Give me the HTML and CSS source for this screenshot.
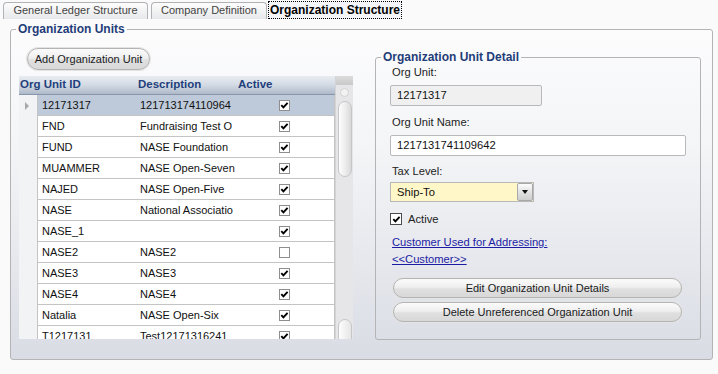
FILE: index.html
```html
<!DOCTYPE html>
<html>
<head>
<meta charset="utf-8">
<link rel="stylesheet" href="styles.css">
</head>
<body>
<div class="tabs">
  <div class="tab tab1">General Ledger Structure</div>
  <div class="tab tab2">Company Definition</div>
  <div class="tab tab-active">Organization Structure</div>
</div>
<fieldset class="units">
  <legend class="legend">Organization Units</legend>
  <div class="left">
    <button class="btn btn-add">Add Organization Unit</button>
    <div class="grid">
      <div class="table">
        <div class="thead">
          <div class="th th1">Org Unit ID</div>
          <div class="th th2">Description</div>
          <div class="th th3">Active</div>
        </div>
        <div class="row sel">
          <div class="rh"><span class="arrow"></span></div>
          <div class="cells"><span class="c1">12171317</span><span class="c2">121713174110964</span><span class="c3"><span class="chk on"></span></span></div>
        </div>
        <div class="row"><div class="rh"></div><div class="cells"><span class="c1">FND</span><span class="c2">Fundraising Test O</span><span class="c3"><span class="chk on"></span></span></div></div>
        <div class="row"><div class="rh"></div><div class="cells"><span class="c1">FUND</span><span class="c2">NASE Foundation</span><span class="c3"><span class="chk on"></span></span></div></div>
        <div class="row"><div class="rh"></div><div class="cells"><span class="c1">MUAMMER</span><span class="c2">NASE Open-Seven</span><span class="c3"><span class="chk on"></span></span></div></div>
        <div class="row"><div class="rh"></div><div class="cells"><span class="c1">NAJED</span><span class="c2">NASE Open-Five</span><span class="c3"><span class="chk on"></span></span></div></div>
        <div class="row"><div class="rh"></div><div class="cells"><span class="c1">NASE</span><span class="c2">National Associatio</span><span class="c3"><span class="chk on"></span></span></div></div>
        <div class="row"><div class="rh"></div><div class="cells"><span class="c1">NASE_1</span><span class="c2"></span><span class="c3"><span class="chk on"></span></span></div></div>
        <div class="row"><div class="rh"></div><div class="cells"><span class="c1">NASE2</span><span class="c2">NASE2</span><span class="c3"><span class="chk"></span></span></div></div>
        <div class="row"><div class="rh"></div><div class="cells"><span class="c1">NASE3</span><span class="c2">NASE3</span><span class="c3"><span class="chk on"></span></span></div></div>
        <div class="row"><div class="rh"></div><div class="cells"><span class="c1">NASE4</span><span class="c2">NASE4</span><span class="c3"><span class="chk on"></span></span></div></div>
        <div class="row"><div class="rh"></div><div class="cells"><span class="c1">Natalia</span><span class="c2">NASE Open-Six</span><span class="c3"><span class="chk on"></span></span></div></div>
        <div class="row"><div class="rh"></div><div class="cells"><span class="c1">T1217131</span><span class="c2">Test12171316241</span><span class="c3"><span class="chk on"></span></span></div></div>
      </div>
      <div class="sb">
        <div class="sb-cap"></div>
        <div class="sb-knob"></div>
        <div class="sb-thumb"></div>
        <div class="sb-fill"></div>
        <div class="sb-bottom"></div>
      </div>
    </div>
  </div>
  <fieldset class="detail">
    <legend class="legend legend-detail">Organization Unit Detail</legend>
    <div class="lbl">Org Unit:</div>
    <div class="field ro">12171317</div>
    <div class="lbl lbl2">Org Unit Name:</div>
    <div class="field inp">1217131741109642</div>
    <div class="lbl lbl3">Tax Level:</div>
    <div class="combo"><span class="combo-text">Ship-To</span><span class="combo-btn"><span class="tri"></span></span></div>
    <div class="active-row"><span class="chk2"></span><span>Active</span></div>
    <a class="link link1" href="#">Customer Used for Addressing:</a>
    <a class="link link2" href="#">&lt;&lt;Customer&gt;&gt;</a>
    <button class="btn wide wide1">Edit Organization Unit Details</button>
    <button class="btn wide wide2">Delete Unreferenced Organization Unit</button>
  </fieldset>
</fieldset>
</body>
</html>
```
FILE: styles.css
```css
* { box-sizing: border-box; }
html, body { margin: 0; }
body {
  width: 718px;
  height: 374px;
  overflow: hidden;
  background: #fafafb;
  font-family: "Liberation Sans", Arial, sans-serif;
  font-size: 11px;
  color: #111;
}
.tabs {
  display: flex;
  align-items: flex-start;
  height: 22px;
  padding-left: 3px;
}
.tab {
  margin-top: 2px;
  height: 17px;
  border: 1px solid #b0b2b6;
  border-bottom: none;
  border-radius: 4px 4px 0 0;
  background: linear-gradient(#fdfdfd, #e7e8ea);
  color: #444;
  font-size: 11px;
  line-height: 15px;
  text-align: center;
}
.tab1 { width: 145px; }
.tab2 { width: 116px; margin-left: 3px; }
.tab-active {
  width: 134px;
  margin-left: 1px;
  margin-top: 1px;
  height: 18px;
  border: 1px dotted #000;
  border-radius: 0;
  background: #f3f5f8;
  color: #000;
  font-weight: bold;
  font-size: 12px;
  line-height: 16px;
}
.units {
  margin: 0 0 0 10px;
  width: 703px;
  min-width: 0;
  padding: 12px 11px 19px 8px;
  border: 1px solid #b4b4b6;
  border-radius: 3px;
  background: linear-gradient(#fcfcfd 0%, #f4f5f7 35%, #e6e8ed 70%, #d9dce4 100%);
  display: flex;
  gap: 22px;
}
.legend {
  padding: 0 2px;
  margin-left: -3px;
  font-weight: bold;
  font-size: 12px;
  line-height: 14px;
  color: #1f3d78;
}
.left {
  width: 334px;
  display: flex;
  flex-direction: column;
  align-items: flex-start;
  gap: 6px;
}
.btn {
  font-family: "Liberation Sans", Arial, sans-serif;
  font-size: 11px;
  color: #1a1a1a;
  height: 22px;
  padding: 0;
  border: 1px solid #b4b4b4;
  border-radius: 11px;
  background: linear-gradient(#fbfbfb 0%, #efefef 45%, #e0e0e0 55%, #d8d8d8 100%);
  box-shadow: 0 0 0 1px #e4e4e4;
}
.btn-add { width: 123px; margin-left: 8px; }
.grid {
  width: 334px;
  height: 263px;
  display: grid;
  grid-template-columns: 316px 18px;
  overflow: hidden;
}
.table {
  background: #fff;
  overflow: hidden;
}
.thead {
  height: 19px;
  display: grid;
  grid-template-columns: 117px 99px 1fr;
  background: linear-gradient(#e9edf2 0%, #d3dae4 50%, #aeb9c9 100%);
  border-bottom: 1px solid #8796ad;
  font-weight: bold;
  font-size: 11.5px;
  line-height: 17px;
  color: #1f3f7c;
}
.th1 { padding-left: 1px; }
.th2 { padding-left: 2px; }
.th3 { padding-left: 3px; }
.row {
  display: grid;
  grid-template-columns: 18px 1fr;
  height: 21px;
}
.rh {
  background: #f2f3f5;
  display: flex;
  align-items: center;
  justify-content: center;
}
.arrow {
  width: 0;
  height: 0;
  border-top: 4px solid transparent;
  border-bottom: 4px solid transparent;
  border-left: 4px solid #a9a9a9;
  margin-left: -3px;
}
.cells {
  display: grid;
  grid-template-columns: 98px 99px 1fr;
  align-items: center;
  border-left: 1px solid #c4c4c4;
  border-right: 1px solid #c4c4c4;
  border-bottom: 1px solid #c4c4c4;
  white-space: nowrap;
}
.sel .cells { background: #bec9da; }
.c1, .c2 { padding-left: 4px; overflow: hidden; }
.c3 { display: flex; justify-content: center; }
.chk {
  width: 11px;
  height: 11px;
  border: 1px solid #8e8e8e;
  background: #fff;
}
.chk.on, .chk2 {
  background: #fff url("data:image/svg+xml;utf8,<svg xmlns='http://www.w3.org/2000/svg' width='9' height='9' viewBox='0 0 9 9'><polyline points='1.3,4.2 3.4,6.4 7.6,1.8' fill='none' stroke='black' stroke-width='1.9'/></svg>") center/9px 9px no-repeat;
}
.sb {
  background: #e6e6e8;
  border-left: 1px solid #d4d4d6;
  display: flex;
  flex-direction: column;
  align-items: center;
}
.sb-cap {
  width: 100%;
  height: 9px;
  background: linear-gradient(#dcdcdc, #c9c9cb);
}
.sb-knob {
  margin-top: 3px;
  width: 9px;
  height: 9px;
  border-radius: 50%;
  border: 1px solid #d2d2d2;
  background: #f2f2f2;
}
.sb-thumb {
  margin-top: 4px;
  width: 14px;
  height: 76px;
  border: 1px solid #c6c6c8;
  border-radius: 7px;
  background: linear-gradient(90deg, #fdfdfd, #eaeaea 60%, #d8d8da);
}
.sb-fill { flex: 1; }
.sb-bottom {
  width: 14px;
  height: 24px;
  margin-bottom: -4px;
  border: 1px solid #c6c6c8;
  border-radius: 7px 7px 0 0;
  background: linear-gradient(90deg, #fdfdfd, #e6e6e6);
}
.detail {
  margin: 2px 0 0 0;
  width: 326px;
  min-width: 0;
  padding: 0 14px 17px 14px;
  border: 1px solid #b4b4b6;
  border-radius: 3px;
  display: flex;
  flex-direction: column;
  align-items: flex-start;
}
.legend-detail { margin-left: -9px; }
.lbl {
  line-height: 16px;
  padding-left: 2px;
  font-size: 11.2px;
  color: #222;
}
.lbl2 { margin-top: 8px; }
.lbl3 { margin-top: 7px; }
.field {
  margin-top: 5px;
  height: 21px;
  border: 1px solid #b9b9bb;
  border-radius: 2px;
  padding-left: 6px;
  line-height: 19px;
  font-size: 11.2px;
  color: #111;
}
.ro { width: 152px; background: #f0f0f0; }
.inp { width: 296px; background: #fff; }
.combo {
  margin-top: 3px;
  width: 144px;
  height: 20px;
  border: 1px solid #b8b8b8;
  background: #fff7c8;
  display: flex;
  align-items: center;
  justify-content: space-between;
  font-size: 11.2px;
}
.combo-text { padding-left: 6px; }
.combo-btn {
  width: 16px;
  height: 18px;
  border: 1px solid #a8a8a8;
  border-radius: 2px;
  background: linear-gradient(#fdfdfd, #e2e2e2 50%, #cfcfcf);
  display: flex;
  align-items: center;
  justify-content: center;
}
.tri {
  width: 0;
  height: 0;
  border-left: 3.5px solid transparent;
  border-right: 3.5px solid transparent;
  border-top: 4px solid #111;
}
.active-row {
  margin-top: 10px;
  height: 14px;
  display: flex;
  align-items: center;
  gap: 6px;
  font-size: 11.2px;
  color: #222;
}
.chk2 {
  width: 12px;
  height: 12px;
  border: 1px solid #4a4a4a;
}
.link {
  line-height: 16px;
  padding-left: 2px;
  color: #1c1ca4;
  text-decoration: underline;
  font-size: 11.2px;
}
.link1 { margin-top: 8px; }
.link2 { margin-top: 1px; }
.wide {
  width: 289px;
  height: 20px;
  margin-left: 3px;
  border-radius: 10px;
}
.wide1 { margin-top: 11px; }
.wide2 { margin-top: 4px; }
```
